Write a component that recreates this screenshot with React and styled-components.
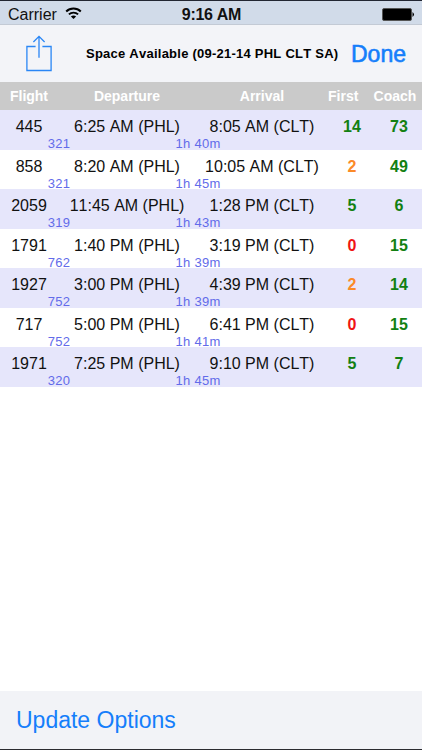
import React from "react";
import styled, { createGlobalStyle } from "styled-components";

const flights = [
  { number: "445", aircraft: "321", departure: "6:25 AM (PHL)", arrival: "8:05 AM (CLT)", duration: "1h 40m", first: 14, coach: 73 },
  { number: "858", aircraft: "321", departure: "8:20 AM (PHL)", arrival: "10:05 AM (CLT)", duration: "1h 45m", first: 2, coach: 49 },
  { number: "2059", aircraft: "319", departure: "11:45 AM (PHL)", arrival: "1:28 PM (CLT)", duration: "1h 43m", first: 5, coach: 6 },
  { number: "1791", aircraft: "762", departure: "1:40 PM (PHL)", arrival: "3:19 PM (CLT)", duration: "1h 39m", first: 0, coach: 15 },
  { number: "1927", aircraft: "752", departure: "3:00 PM (PHL)", arrival: "4:39 PM (CLT)", duration: "1h 39m", first: 2, coach: 14 },
  { number: "717", aircraft: "752", departure: "5:00 PM (PHL)", arrival: "6:41 PM (CLT)", duration: "1h 41m", first: 0, coach: 15 },
  { number: "1971", aircraft: "320", departure: "7:25 PM (PHL)", arrival: "9:10 PM (CLT)", duration: "1h 45m", first: 5, coach: 7 },
];

const seatColor = (count) => {
  if (count === 0) return "#f01414";
  if (count < 5) return "#fb8a28";
  return "#128012";
};

const App = () => (
  <>
    <GlobalStyle />
    <Screen>
      <StatusBar>
        <Carrier>
          Carrier
          <svg width="17" height="13" viewBox="0 0 17 13">
            <path d="M1.2 4.5 C5.2 0.6 11.8 0.6 15.8 4.5" fill="none" stroke="#000" strokeWidth="2" />
            <path d="M3.9 7.4 C6.4 5 10.6 5 13.1 7.4" fill="none" stroke="#000" strokeWidth="1.9" />
            <path d="M5.9 9.5 C7.3 8.1 9.7 8.1 11.1 9.5 L8.5 12.1 Z" />
          </svg>
        </Carrier>
        <Clock>9:16 AM</Clock>
        <Battery>
          <svg width="33" height="13" viewBox="0 0 33 13">
            <rect x="0.5" y="0.5" width="29" height="12" rx="1.5" fill="#000" stroke="#555" />
            <path d="M30.5 4 Q33.5 6.5 30.5 9 Z" />
          </svg>
        </Battery>
      </StatusBar>
      <NavBar>
        <ShareButton>
          <svg width="26" height="37" viewBox="0 0 26 37" fill="none" stroke="#2a86f5" strokeWidth="1.3">
            <path d="M9.6 11.5 H0.9 V35.5 H25.1 V11.5 H16.4" />
            <path d="M13 22.8 V1.4 M7.4 7 L13 1.4 L18.6 7" />
          </svg>
        </ShareButton>
        <Title>Space Available (09-21-14 PHL CLT SA)</Title>
        <DoneButton>Done</DoneButton>
      </NavBar>
      <TableHeader>
        <span>Flight</span>
        <span>Departure</span>
        <span>Arrival</span>
        <span>First</span>
        <span>Coach</span>
      </TableHeader>
      <FlightList>
        {flights.map((flight) => (
          <FlightRow key={flight.number}>
            <MainLine>
              <span>{flight.number}</span>
              <span>{flight.departure}</span>
              <span>{flight.arrival}</span>
              <Seats count={flight.first} />
              <Seats count={flight.coach} />
            </MainLine>
            <DetailLine>
              <span>{flight.aircraft}</span>
              <span>{flight.duration}</span>
            </DetailLine>
          </FlightRow>
        ))}
      </FlightList>
      <BottomBar>
        <UpdateButton>Update Options</UpdateButton>
      </BottomBar>
    </Screen>
  </>
);

const Seats = ({ count }) => <SeatCount $color={seatColor(count)}>{count}</SeatCount>;

const GlobalStyle = createGlobalStyle`
  body {
    margin: 0;
    font-family: "Liberation Sans", Arial, sans-serif;
    font-kerning: none;
  }

  * {
    box-sizing: border-box;
  }
`;

const Screen = styled.div`
  width: 422px;
  height: 750px;
  display: flex;
  flex-direction: column;
  overflow: hidden;
  background-color: white;
  border-top: 1px solid #222632;
  border-bottom: 1px solid #2b2b30;
`;

const StatusBar = styled.div`
  height: 24px;
  flex: none;
  display: grid;
  grid-template-columns: 1fr 80px 1fr;
  align-items: center;
  padding: 4px 7px 0 8px;
  background-color: #d1dbe9;
  border-bottom: 1px solid #c3cad5;
  color: #111;
`;

const Carrier = styled.div`
  display: flex;
  align-items: center;
  gap: 8px;
  font-size: 16px;
  line-height: 20px;

  svg {
    margin-top: -3px;
  }
`;

const Clock = styled.div`
  text-align: center;
  font-size: 16px;
  line-height: 20px;
  font-weight: bold;
  letter-spacing: -0.3px;
`;

const Battery = styled.div`
  display: flex;
  justify-content: flex-end;
  margin-top: -2px;
`;

const NavBar = styled.div`
  height: 57px;
  flex: none;
  display: flex;
  align-items: center;
  background-color: #f3f4f8;
`;

const Button = styled.button`
  border: 0;
  padding: 0;
  background: none;
  font-family: inherit;
  color: #157efb;
  white-space: nowrap;
`;

const ShareButton = styled(Button)`
  width: 26px;
  height: 37px;
  margin: 0 34px 1px 26px;

  svg {
    display: block;
  }
`;

const Title = styled.div`
  width: 251px;
  font-size: 13px;
  font-weight: bold;
  letter-spacing: 0.24px;
  white-space: nowrap;
`;

const DoneButton = styled(Button)`
  margin: 2px 0 0 14px;
  font-size: 23px;
  -webkit-text-stroke: 0.6px #157efb;
`;

const TableHeader = styled.div`
  height: 28px;
  flex: none;
  display: grid;
  grid-template-columns: 58px 138px 132px 30px 64px;
  align-items: center;
  text-align: center;
  background-color: #cacaca;
  color: white;
  font-size: 14px;
  font-weight: bold;

  span:last-child {
    padding-left: 10px;
  }
`;

const FlightList = styled.div`
  flex: 1;
`;

const FlightRow = styled.div`
  height: 39.5px;
  padding-top: 7px;

  &:nth-child(odd) {
    background-color: #e6e6fb;
  }
`;

const MainLine = styled.div`
  display: grid;
  grid-template-columns: 58px 138px 132px 48px 46px;
  text-align: center;
  white-space: nowrap;
  font-size: 16px;
  line-height: 20px;
  color: #111;
`;

const SeatCount = styled.span`
  font-weight: bold;
  color: ${({ $color }) => $color};
`;

const DetailLine = styled.div`
  display: grid;
  grid-template-columns: 118px 160px;
  text-align: center;
  font-size: 13px;
  line-height: 13px;
  letter-spacing: 0.3px;
  color: #626bea;
`;

const BottomBar = styled.div`
  height: 58px;
  flex: none;
  display: flex;
  align-items: center;
  padding: 1px 0 0 16px;
  background-color: #f2f3f7;
`;

const UpdateButton = styled(Button)`
  font-size: 23px;
`;

export default App;
